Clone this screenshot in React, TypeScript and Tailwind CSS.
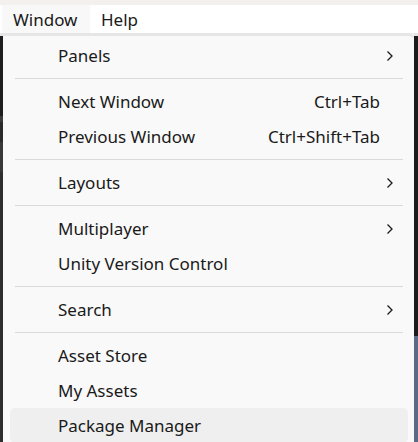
import React from 'react';

type Item =
  | { kind: 'sep' }
  | { kind: 'item'; label: string; shortcut?: string; sub?: boolean; active?: boolean };

const items: Item[] = [
  { kind: 'item', label: 'Panels', sub: true },
  { kind: 'sep' },
  { kind: 'item', label: 'Next Window', shortcut: 'Ctrl+Tab' },
  { kind: 'item', label: 'Previous Window', shortcut: 'Ctrl+Shift+Tab' },
  { kind: 'sep' },
  { kind: 'item', label: 'Layouts', sub: true },
  { kind: 'sep' },
  { kind: 'item', label: 'Multiplayer', sub: true },
  { kind: 'item', label: 'Unity Version Control' },
  { kind: 'sep' },
  { kind: 'item', label: 'Search', sub: true },
  { kind: 'sep' },
  { kind: 'item', label: 'Asset Store' },
  { kind: 'item', label: 'My Assets' },
  { kind: 'item', label: 'Package Manager', active: true },
];

const Chevron = () => (
  <svg width="8" height="12" viewBox="0 0 8 12" className="absolute right-[14px] top-[12px]">
    <polyline points="1.5,1.5 6,6 1.5,10.5" fill="none" stroke="#1b1b1b" strokeWidth="1.3" />
  </svg>
);

export default function App() {
  return (
    <div
      className="w-[418px] h-[442px] overflow-hidden bg-[#f3f0ed] flex flex-col text-[#1a1a1a]"
      style={{ fontFamily: '"Noto Sans", "Open Sans", sans-serif' }}
    >
      <div className="h-[5px] shrink-0" />
      {/* menu bar */}
      <div className="h-[28px] shrink-0 bg-white flex items-stretch text-[17px]">
        <div className="ml-[2px] w-[88px] bg-[#f8f8f8] flex items-center pl-[11px] leading-none">Window</div>
        <div className="flex items-center pl-[11px] leading-none">Help</div>
      </div>
      <div className="flex flex-1 min-h-0">
        {/* dark editor background peeking on the left */}
        <div className="w-[3px] flex flex-col">
          <div className="h-[3px] bg-[#e6e6e6]" />
          <div className="h-[80px] bg-[#1e1e1e]" />
          <div className="h-[6px] bg-[#3a3a3a]" />
          <div className="h-[20px] bg-[#2a2a2a]" />
          <div className="h-[30px] bg-[#383838]" />
          <div className="flex-1 bg-[#2e2e2e]" />
        </div>
        <div className="flex-1 bg-[#f9f9f9] border-t-[3px] border-[#e6e6e6] rounded-tr-[6px] pt-[2px]">
          {items.map((it, i) =>
            it.kind === 'sep' ? (
              <div key={i} className="h-[11px] flex items-center mx-[12px] mr-[11px]">
                <div className="h-px w-full bg-[#d9d9d9]" />
              </div>
            ) : (
              <div
                key={i}
                className={
                  'relative h-[35px] ml-[7px] mr-[6px] pl-[48px] pr-[28px] flex items-center justify-between rounded-[5px] text-[17px] ' +
                  (it.active ? 'bg-[#efefef]' : '')
                }
              >
                <span>{it.label}</span>
                {it.shortcut && <span>{it.shortcut}</span>}
                {it.sub && <Chevron />}
              </div>
            )
          )}
        </div>
        <div className="w-[4px] flex flex-col">
          <div className="h-[3px] bg-[#e6e6e6]" />
          <div className="h-[300px] bg-[#1c1c1c]" />
          <div className="flex-1 bg-[#5b6b86]" />
        </div>
      </div>
    </div>
  );
}
